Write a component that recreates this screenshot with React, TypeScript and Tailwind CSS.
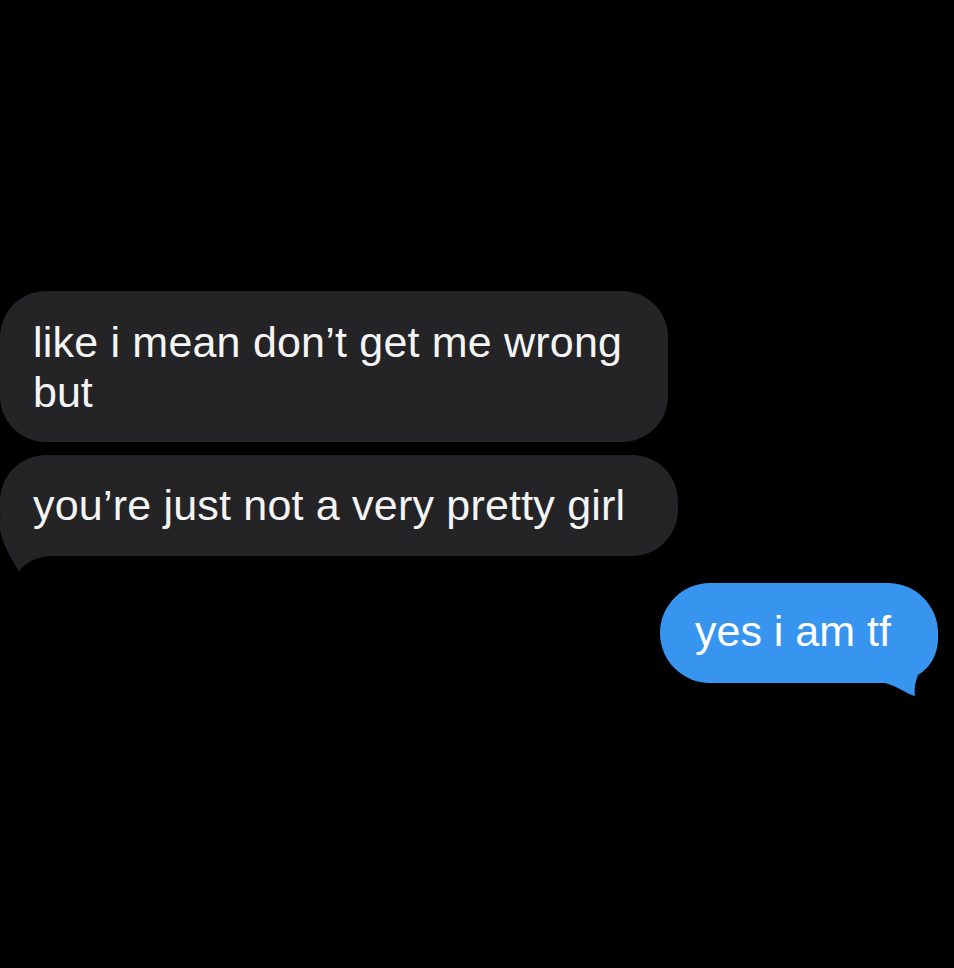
import React from "react";

const font = { fontFamily: '"Liberation Sans", Arial, sans-serif' };

const GrayTail = () => (
  <svg
    className="absolute left-0 top-[62px]"
    width="60"
    height="60"
    viewBox="0 0 60 60"
    fill="#242427"
  >
    <path d="M0 0 L0 13 C3 28 12 43 19 55 C23 48 32 40 52 39 L52 0 Z" />
  </svg>
);

const BlueTail = () => (
  <svg
    className="absolute left-[210px] top-[47px]"
    width="75"
    height="72"
    viewBox="0 0 75 72"
    fill="#3795ef"
  >
    <path d="M0 0 H68 V10 C67 30 56 40 48 45 C45 52 44 60 45 66 C38 65 28 56 15 53 L0 53 Z" />
  </svg>
);

export default function App() {
  return (
    <div className="min-h-screen w-full bg-black pt-[291px]" style={font}>
      <div className="flex flex-col items-start text-[43px] leading-[50px] text-[#f4f4f4]">
        <div className="w-[668px] rounded-[46px] bg-[#242427] pl-[33px] pt-[26px] pb-[25px]">
          <div className="whitespace-nowrap tracking-[0.2px]">like i mean don’t get me wrong</div>
          <div>but</div>
        </div>

        <div className="relative mt-[13px] w-[678px] rounded-[46px] bg-[#242427] pl-[33px] pt-[25px] pb-[26px]">
          <GrayTail />
          <div className="relative whitespace-nowrap tracking-[0.2px]">you’re just not a very pretty girl</div>
        </div>

        <div className="relative mt-[27px] mr-[16px] self-end w-[278px] rounded-[50px] bg-[#3795ef] pl-[35px] pt-[23px] pb-[27px] text-white">
          <BlueTail />
          <div className="relative whitespace-nowrap">yes i am tf</div>
        </div>
      </div>
    </div>
  );
}
